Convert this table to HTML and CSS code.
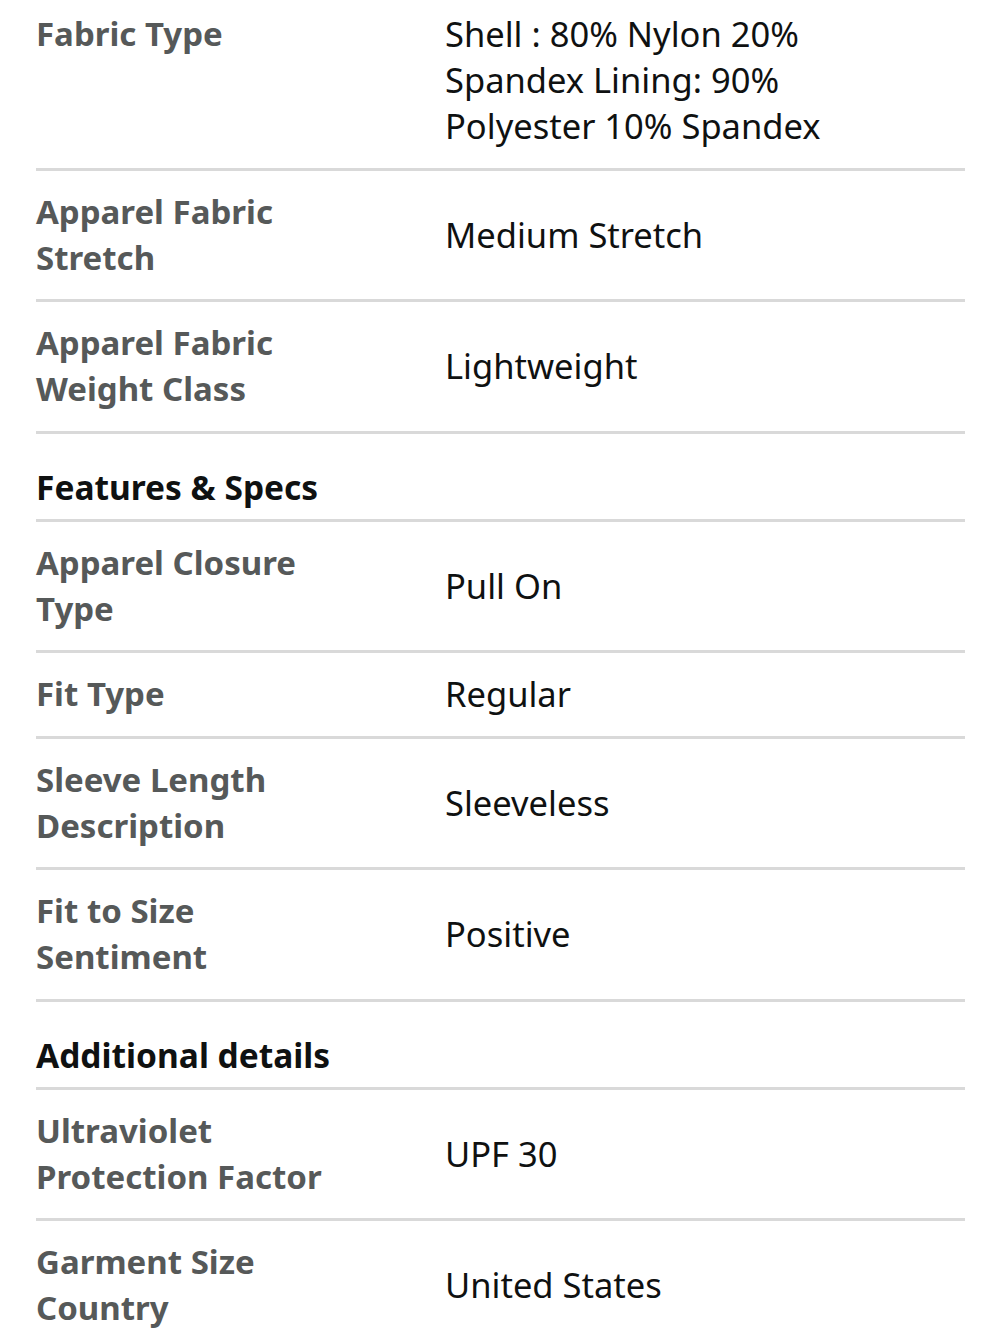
FILE: index.html
```html
<!DOCTYPE html>
<html lang="en">
<head>
<meta charset="utf-8">
<title>Product details</title>
<link rel="stylesheet" href="styles.css">
</head>
<body>
<div class="specs">
  <div class="row">
    <div class="label">Fabric Type</div>
    <div class="value">Shell : 80% Nylon 20% Spandex Lining: 90% Polyester 10% Spandex</div>
  </div>
  <div class="row">
    <div class="label">Apparel Fabric Stretch</div>
    <div class="value">Medium Stretch</div>
  </div>
  <div class="row">
    <div class="label">Apparel Fabric Weight Class</div>
    <div class="value">Lightweight</div>
  </div>
  <div class="section">Features &amp; Specs</div>
  <div class="row">
    <div class="label">Apparel Closure Type</div>
    <div class="value">Pull On</div>
  </div>
  <div class="row">
    <div class="label">Fit Type</div>
    <div class="value">Regular</div>
  </div>
  <div class="row">
    <div class="label">Sleeve Length Description</div>
    <div class="value">Sleeveless</div>
  </div>
  <div class="row">
    <div class="label">Fit to Size Sentiment</div>
    <div class="value">Positive</div>
  </div>
  <div class="section">Additional details</div>
  <div class="row">
    <div class="label">Ultraviolet Protection Factor</div>
    <div class="value">UPF 30</div>
  </div>
  <div class="row">
    <div class="label">Garment Size Country</div>
    <div class="value">United States</div>
  </div>
</div>
</body>
</html>
```
FILE: styles.css
```css
html, body {
  margin: 0;
  padding: 0;
  background: #ffffff;
}

body {
  font-family: "Noto Sans", "Open Sans", sans-serif;
  line-height: 46px;
  color: #0f1111;
}

.specs {
  margin: -7px 35px 0 36px;
}

.row {
  display: grid;
  grid-template-columns: 409px 1fr;
  padding: 18px 0 18.5px;
  border-bottom: 3px solid #d9d9d9;
}

.label {
  align-self: start;
  font-size: 33px;
  font-weight: 700;
  color: #565959;
  max-width: 320px;
}

.value {
  align-self: center;
  font-size: 34.5px;
  color: #0f1111;
  padding-right: 80px;
}

.section {
  font-size: 33.5px;
  font-weight: 700;
  color: #0f1111;
  padding: 30px 0 9px;
  border-bottom: 3px solid #d9d9d9;
}
```
